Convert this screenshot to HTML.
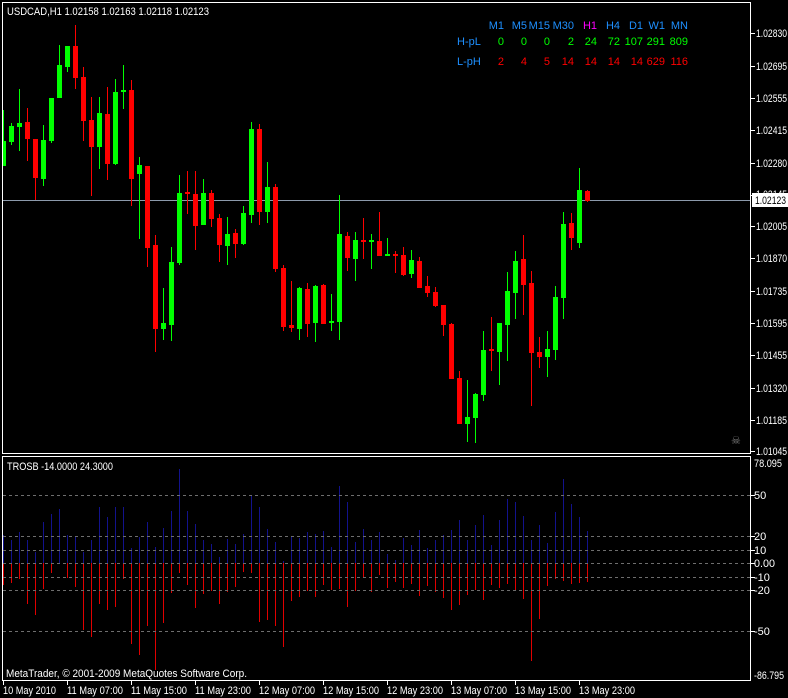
<!DOCTYPE html>
<html><head><meta charset="utf-8"><style>
html,body{margin:0;padding:0;background:#000;width:788px;height:698px;overflow:hidden}
svg{display:block}
text{font-family:"Liberation Sans",sans-serif;font-size:11px}
</style></head><body>
<svg width="788" height="698" viewBox="0 0 788 698" xmlns="http://www.w3.org/2000/svg">
<rect width="788" height="698" fill="#000"/>
<g fill="none" stroke="#fff" stroke-width="1">
<rect x="2.5" y="2.5" width="748" height="451"/>
<rect x="2.5" y="456.5" width="748" height="224"/>
</g>
<line x1="3" y1="200.5" x2="750" y2="200.5" stroke="#8c9aab"/>
<g fill="#00ff00">
<rect x="3" y="110" width="1" height="56"/><rect x="3" y="141" width="3" height="25"/>
<rect x="11" y="123" width="1" height="22"/><rect x="9" y="126" width="5" height="16"/>
<rect x="19" y="89" width="1" height="62"/><rect x="17" y="123" width="5" height="4"/>
<rect x="43" y="125" width="1" height="61"/><rect x="41" y="140" width="5" height="39"/>
<rect x="51" y="98" width="1" height="45"/><rect x="49" y="98" width="5" height="43"/>
<rect x="59" y="45" width="1" height="53"/><rect x="57" y="65" width="5" height="33"/>
<rect x="67" y="46" width="1" height="26"/><rect x="65" y="46" width="5" height="21"/>
<rect x="99" y="97" width="1" height="72"/><rect x="97" y="113" width="5" height="34"/>
<rect x="115" y="79" width="1" height="86"/><rect x="113" y="92" width="5" height="72"/>
<rect x="123" y="65" width="1" height="44"/><rect x="121" y="90" width="5" height="2"/>
<rect x="139" y="157" width="1" height="82"/><rect x="137" y="165" width="5" height="9"/>
<rect x="163" y="288" width="1" height="52"/><rect x="161" y="323" width="5" height="6"/>
<rect x="171" y="247" width="1" height="94"/><rect x="169" y="262" width="5" height="63"/>
<rect x="179" y="175" width="1" height="90"/><rect x="177" y="193" width="5" height="70"/>
<rect x="203" y="179" width="1" height="46"/><rect x="201" y="193" width="5" height="32"/>
<rect x="227" y="217" width="1" height="48"/><rect x="225" y="234" width="5" height="12"/>
<rect x="243" y="206" width="1" height="39"/><rect x="241" y="213" width="5" height="31"/>
<rect x="251" y="122" width="1" height="101"/><rect x="249" y="129" width="5" height="86"/>
<rect x="267" y="162" width="1" height="61"/><rect x="265" y="187" width="5" height="25"/>
<rect x="299" y="287" width="1" height="53"/><rect x="297" y="288" width="5" height="41"/>
<rect x="315" y="285" width="1" height="57"/><rect x="313" y="286" width="5" height="37"/>
<rect x="331" y="294" width="1" height="37"/><rect x="329" y="321" width="5" height="2"/>
<rect x="339" y="195" width="1" height="145"/><rect x="337" y="234" width="5" height="88"/>
<rect x="355" y="232" width="1" height="49"/><rect x="353" y="240" width="5" height="19"/>
<rect x="371" y="234" width="1" height="35"/><rect x="369" y="240" width="5" height="2"/>
<rect x="387" y="238" width="1" height="18"/><rect x="385" y="254" width="5" height="2"/>
<rect x="411" y="250" width="1" height="28"/><rect x="409" y="260" width="5" height="14"/>
<rect x="467" y="380" width="1" height="62"/><rect x="465" y="417" width="5" height="7"/>
<rect x="475" y="393" width="1" height="50"/><rect x="473" y="394" width="5" height="24"/>
<rect x="483" y="331" width="1" height="70"/><rect x="481" y="350" width="5" height="45"/>
<rect x="499" y="323" width="1" height="62"/><rect x="497" y="323" width="5" height="29"/>
<rect x="507" y="272" width="1" height="89"/><rect x="505" y="291" width="5" height="34"/>
<rect x="515" y="251" width="1" height="68"/><rect x="513" y="261" width="5" height="32"/>
<rect x="547" y="331" width="1" height="46"/><rect x="545" y="349" width="5" height="8"/>
<rect x="555" y="286" width="1" height="74"/><rect x="553" y="297" width="5" height="53"/>
<rect x="563" y="212" width="1" height="107"/><rect x="561" y="224" width="5" height="74"/>
<rect x="579" y="168" width="1" height="80"/><rect x="577" y="190" width="5" height="53"/>
</g>
<g fill="#ff0000">
<rect x="27" y="108" width="1" height="53"/><rect x="25" y="122" width="5" height="17"/>
<rect x="35" y="139" width="1" height="61"/><rect x="33" y="139" width="5" height="39"/>
<rect x="75" y="25" width="1" height="64"/><rect x="73" y="46" width="5" height="32"/>
<rect x="83" y="67" width="1" height="74"/><rect x="81" y="77" width="5" height="44"/>
<rect x="91" y="97" width="1" height="99"/><rect x="89" y="120" width="5" height="27"/>
<rect x="107" y="87" width="1" height="93"/><rect x="105" y="114" width="5" height="50"/>
<rect x="131" y="80" width="1" height="126"/><rect x="129" y="90" width="5" height="89"/>
<rect x="147" y="166" width="1" height="101"/><rect x="145" y="166" width="5" height="82"/>
<rect x="155" y="235" width="1" height="117"/><rect x="153" y="245" width="5" height="84"/>
<rect x="187" y="171" width="1" height="43"/><rect x="185" y="192" width="5" height="2"/>
<rect x="195" y="171" width="1" height="79"/><rect x="193" y="194" width="5" height="32"/>
<rect x="211" y="190" width="1" height="37"/><rect x="209" y="193" width="5" height="26"/>
<rect x="219" y="214" width="1" height="48"/><rect x="217" y="218" width="5" height="27"/>
<rect x="235" y="229" width="1" height="29"/><rect x="233" y="233" width="5" height="11"/>
<rect x="259" y="124" width="1" height="101"/><rect x="257" y="129" width="5" height="83"/>
<rect x="275" y="184" width="1" height="88"/><rect x="273" y="187" width="5" height="82"/>
<rect x="283" y="265" width="1" height="66"/><rect x="281" y="268" width="5" height="59"/>
<rect x="291" y="281" width="1" height="51"/><rect x="289" y="325" width="5" height="3"/>
<rect x="307" y="283" width="1" height="54"/><rect x="305" y="289" width="5" height="35"/>
<rect x="323" y="284" width="1" height="40"/><rect x="321" y="285" width="5" height="39"/>
<rect x="347" y="232" width="1" height="39"/><rect x="345" y="236" width="5" height="22"/>
<rect x="363" y="218" width="1" height="41"/><rect x="361" y="240" width="5" height="2"/>
<rect x="379" y="212" width="1" height="44"/><rect x="377" y="241" width="5" height="15"/>
<rect x="395" y="251" width="1" height="22"/><rect x="393" y="254" width="5" height="2"/>
<rect x="403" y="247" width="1" height="29"/><rect x="401" y="255" width="5" height="20"/>
<rect x="419" y="257" width="1" height="31"/><rect x="417" y="261" width="5" height="27"/>
<rect x="427" y="276" width="1" height="21"/><rect x="425" y="286" width="5" height="7"/>
<rect x="435" y="287" width="1" height="20"/><rect x="433" y="292" width="5" height="14"/>
<rect x="443" y="305" width="1" height="31"/><rect x="441" y="305" width="5" height="20"/>
<rect x="451" y="323" width="1" height="56"/><rect x="449" y="324" width="5" height="55"/>
<rect x="459" y="371" width="1" height="53"/><rect x="457" y="378" width="5" height="46"/>
<rect x="491" y="317" width="1" height="54"/><rect x="489" y="349" width="5" height="2"/>
<rect x="523" y="235" width="1" height="80"/><rect x="521" y="259" width="5" height="26"/>
<rect x="531" y="271" width="1" height="135"/><rect x="529" y="283" width="5" height="70"/>
<rect x="539" y="337" width="1" height="31"/><rect x="537" y="352" width="5" height="5"/>
<rect x="571" y="213" width="1" height="37"/><rect x="569" y="223" width="5" height="15"/>
<rect x="587" y="190" width="1" height="12"/><rect x="585" y="191" width="5" height="10"/>
</g>
<g stroke="#fff"><path d="M751 33.5h4M751 66.5h4M751 98.5h4M751 130.5h4M751 163.5h4M751 195.5h4M751 226.5h4M751 258.5h4M751 291.5h4M751 323.5h4M751 355.5h4M751 388.5h4M751 420.5h4M751 451.5h4M751 495.5h4M751 536.5h4M751 550.5h4M751 563.5h4M751 577.5h4M751 590.5h4M751 631.5h4"/></g>
<g fill="#fff">
<text x="756" y="37" textLength="31" lengthAdjust="spacingAndGlyphs">1.02830</text>
<text x="756" y="70" textLength="31" lengthAdjust="spacingAndGlyphs">1.02695</text>
<text x="756" y="102" textLength="31" lengthAdjust="spacingAndGlyphs">1.02555</text>
<text x="756" y="134" textLength="31" lengthAdjust="spacingAndGlyphs">1.02415</text>
<text x="756" y="167" textLength="31" lengthAdjust="spacingAndGlyphs">1.02280</text>
<text x="756" y="198" textLength="31" lengthAdjust="spacingAndGlyphs">1.02145</text>
<text x="756" y="230" textLength="31" lengthAdjust="spacingAndGlyphs">1.02005</text>
<text x="756" y="262" textLength="31" lengthAdjust="spacingAndGlyphs">1.01870</text>
<text x="756" y="295" textLength="31" lengthAdjust="spacingAndGlyphs">1.01735</text>
<text x="756" y="327" textLength="31" lengthAdjust="spacingAndGlyphs">1.01595</text>
<text x="756" y="359" textLength="31" lengthAdjust="spacingAndGlyphs">1.01455</text>
<text x="756" y="392" textLength="31" lengthAdjust="spacingAndGlyphs">1.01320</text>
<text x="756" y="424" textLength="31" lengthAdjust="spacingAndGlyphs">1.01185</text>
<text x="756" y="455" textLength="31" lengthAdjust="spacingAndGlyphs">1.01045</text>
</g>
<rect x="752" y="193" width="36" height="14" fill="#fff"/>
<text x="755" y="204" fill="#000" textLength="31" lengthAdjust="spacingAndGlyphs">1.02123</text>
<text x="731" y="444" fill="#808080" font-size="15">☠</text>
<text x="7" y="15" fill="#fff" textLength="202" lengthAdjust="spacingAndGlyphs">USDCAD,H1  1.02158 1.02163 1.02118 1.02123</text>
<g fill="#1e90ff" text-anchor="end">
<text x="504" y="29">M1</text><text x="527" y="29">M5</text><text x="550" y="29">M15</text><text x="574" y="29">M30</text>
<text x="597" y="29" fill="#ff00ff">H1</text><text x="620" y="29">H4</text><text x="643" y="29">D1</text><text x="665" y="29">W1</text><text x="688" y="29">MN</text>
</g>
<text x="457" y="45" fill="#1e90ff">H-pL</text>
<text x="457" y="65" fill="#1e90ff">L-pH</text>
<g fill="#00ff00" text-anchor="end">
<text x="504" y="45">0</text><text x="527" y="45">0</text><text x="550" y="45">0</text><text x="574" y="45">2</text><text x="597" y="45">24</text><text x="620" y="45">72</text><text x="643" y="45">107</text><text x="665" y="45">291</text><text x="688" y="45">809</text>
</g>
<g fill="#ff0000" text-anchor="end">
<text x="504" y="65">2</text><text x="527" y="65">4</text><text x="550" y="65">5</text><text x="574" y="65">14</text><text x="597" y="65">14</text><text x="620" y="65">14</text><text x="643" y="65">14</text><text x="665" y="65">629</text><text x="688" y="65">116</text>
</g>
<path fill="none" stroke="#12128c" d="M3.5 535V563M11.5 540V563M19.5 532V563M27.5 540V563M35.5 552V563M43.5 522V563M51.5 514V563M59.5 509V563M67.5 535V563M75.5 537V563M83.5 552V563M91.5 540V563M99.5 507V563M107.5 517V563M115.5 507V563M123.5 507V563M131.5 548V563M139.5 537V563M147.5 522V563M155.5 547V563M163.5 528V563M171.5 511V563M179.5 469V563M187.5 511V563M195.5 524V563M203.5 540V563M211.5 544V563M219.5 557V563M227.5 539V563M235.5 544V563M243.5 534V563M251.5 495V563M259.5 507V563M267.5 529V563M275.5 542V563M283.5 561V563M291.5 536V563M299.5 538V563M307.5 532V563M315.5 534V563M323.5 531V563M331.5 547V563M339.5 486V563M347.5 502V563M355.5 542V563M363.5 529V563M371.5 540V563M379.5 532V563M387.5 554V563M395.5 560V563M403.5 538V563M411.5 545V563M419.5 530V563M427.5 548V563M435.5 540V563M443.5 535V563M451.5 530V563M459.5 520V563M467.5 540V563M475.5 525V563M483.5 515V563M491.5 545V563M499.5 520V563M507.5 499V563M515.5 502V563M523.5 516V563M531.5 540V563M539.5 525V563M547.5 543V563M555.5 512V563M563.5 479V563M571.5 504V563M579.5 517V563M587.5 531V563"/>
<path fill="none" stroke="#e00000" d="M3.5 563V585M11.5 563V583M19.5 563V579M27.5 563V604M35.5 563V615M43.5 563V589M51.5 563V573M67.5 563V578M75.5 563V587M83.5 563V630M91.5 563V637M99.5 563V604M107.5 563V610M115.5 563V607M123.5 563V579M131.5 563V644M139.5 563V655M147.5 563V626M155.5 563V670M163.5 563V623M171.5 563V593M179.5 563V573M187.5 563V585M195.5 563V608M203.5 563V594M211.5 563V591M219.5 563V604M227.5 563V592M235.5 563V587M243.5 563V572M251.5 563V573M259.5 563V622M267.5 563V620M275.5 563V626M283.5 563V647M291.5 563V601M299.5 563V597M307.5 563V591M315.5 563V597M323.5 563V585M331.5 563V590M339.5 563V589M347.5 563V607M355.5 563V591M363.5 563V577M371.5 563V592M379.5 563V575M387.5 563V588M395.5 563V582M403.5 563V588M411.5 563V584M419.5 563V596M427.5 563V586M435.5 563V592M443.5 563V598M451.5 563V610M459.5 563V605M467.5 563V595M475.5 563V590M483.5 563V600M491.5 563V585M499.5 563V588M507.5 563V584M515.5 563V590M523.5 563V599M531.5 563V661M539.5 563V619M547.5 563V586M555.5 563V579M563.5 563V581M571.5 563V584M579.5 563V583M587.5 563V582"/>
<g stroke="#6e6e6e" stroke-dasharray="3,3"><path d="M3 495.5H750M3 536.5H750M3 550.5H750M3 563.5H750M3 577.5H750M3 590.5H750M3 631.5H750"/></g>
<g fill="#fff">
<text x="754" y="467" textLength="28" lengthAdjust="spacingAndGlyphs">78.095</text>
<text x="754" y="499">50</text>
<text x="754" y="540">20</text>
<text x="754" y="554">10</text>
<text x="754" y="567" textLength="21" lengthAdjust="spacingAndGlyphs">0.00</text>
<text x="754" y="581">-10</text>
<text x="754" y="594">-20</text>
<text x="754" y="635">-50</text>
<text x="754" y="679" textLength="30" lengthAdjust="spacingAndGlyphs">-86.795</text>
<text x="7" y="470" textLength="106" lengthAdjust="spacingAndGlyphs">TROSB -14.0000 24.3000</text>
<text x="6" y="677" textLength="241" lengthAdjust="spacingAndGlyphs">MetaTrader, © 2001-2009 MetaQuotes Software Corp.</text>
</g>
<g stroke="#fff"><path d="M3.5 681v4M67.5 681v4M131.5 681v4M195.5 681v4M259.5 681v4M323.5 681v4M387.5 681v4M451.5 681v4M515.5 681v4M579.5 681v4"/></g>
<g fill="#fff">
<text x="3" y="694" textLength="53" lengthAdjust="spacingAndGlyphs">10 May 2010</text>
<text x="67" y="694" textLength="56" lengthAdjust="spacingAndGlyphs">11 May 07:00</text>
<text x="131" y="694" textLength="56" lengthAdjust="spacingAndGlyphs">11 May 15:00</text>
<text x="195" y="694" textLength="56" lengthAdjust="spacingAndGlyphs">11 May 23:00</text>
<text x="259" y="694" textLength="56" lengthAdjust="spacingAndGlyphs">12 May 07:00</text>
<text x="323" y="694" textLength="56" lengthAdjust="spacingAndGlyphs">12 May 15:00</text>
<text x="387" y="694" textLength="56" lengthAdjust="spacingAndGlyphs">12 May 23:00</text>
<text x="451" y="694" textLength="56" lengthAdjust="spacingAndGlyphs">13 May 07:00</text>
<text x="515" y="694" textLength="56" lengthAdjust="spacingAndGlyphs">13 May 15:00</text>
<text x="579" y="694" textLength="56" lengthAdjust="spacingAndGlyphs">13 May 23:00</text>
</g>
</svg>
</body></html>
